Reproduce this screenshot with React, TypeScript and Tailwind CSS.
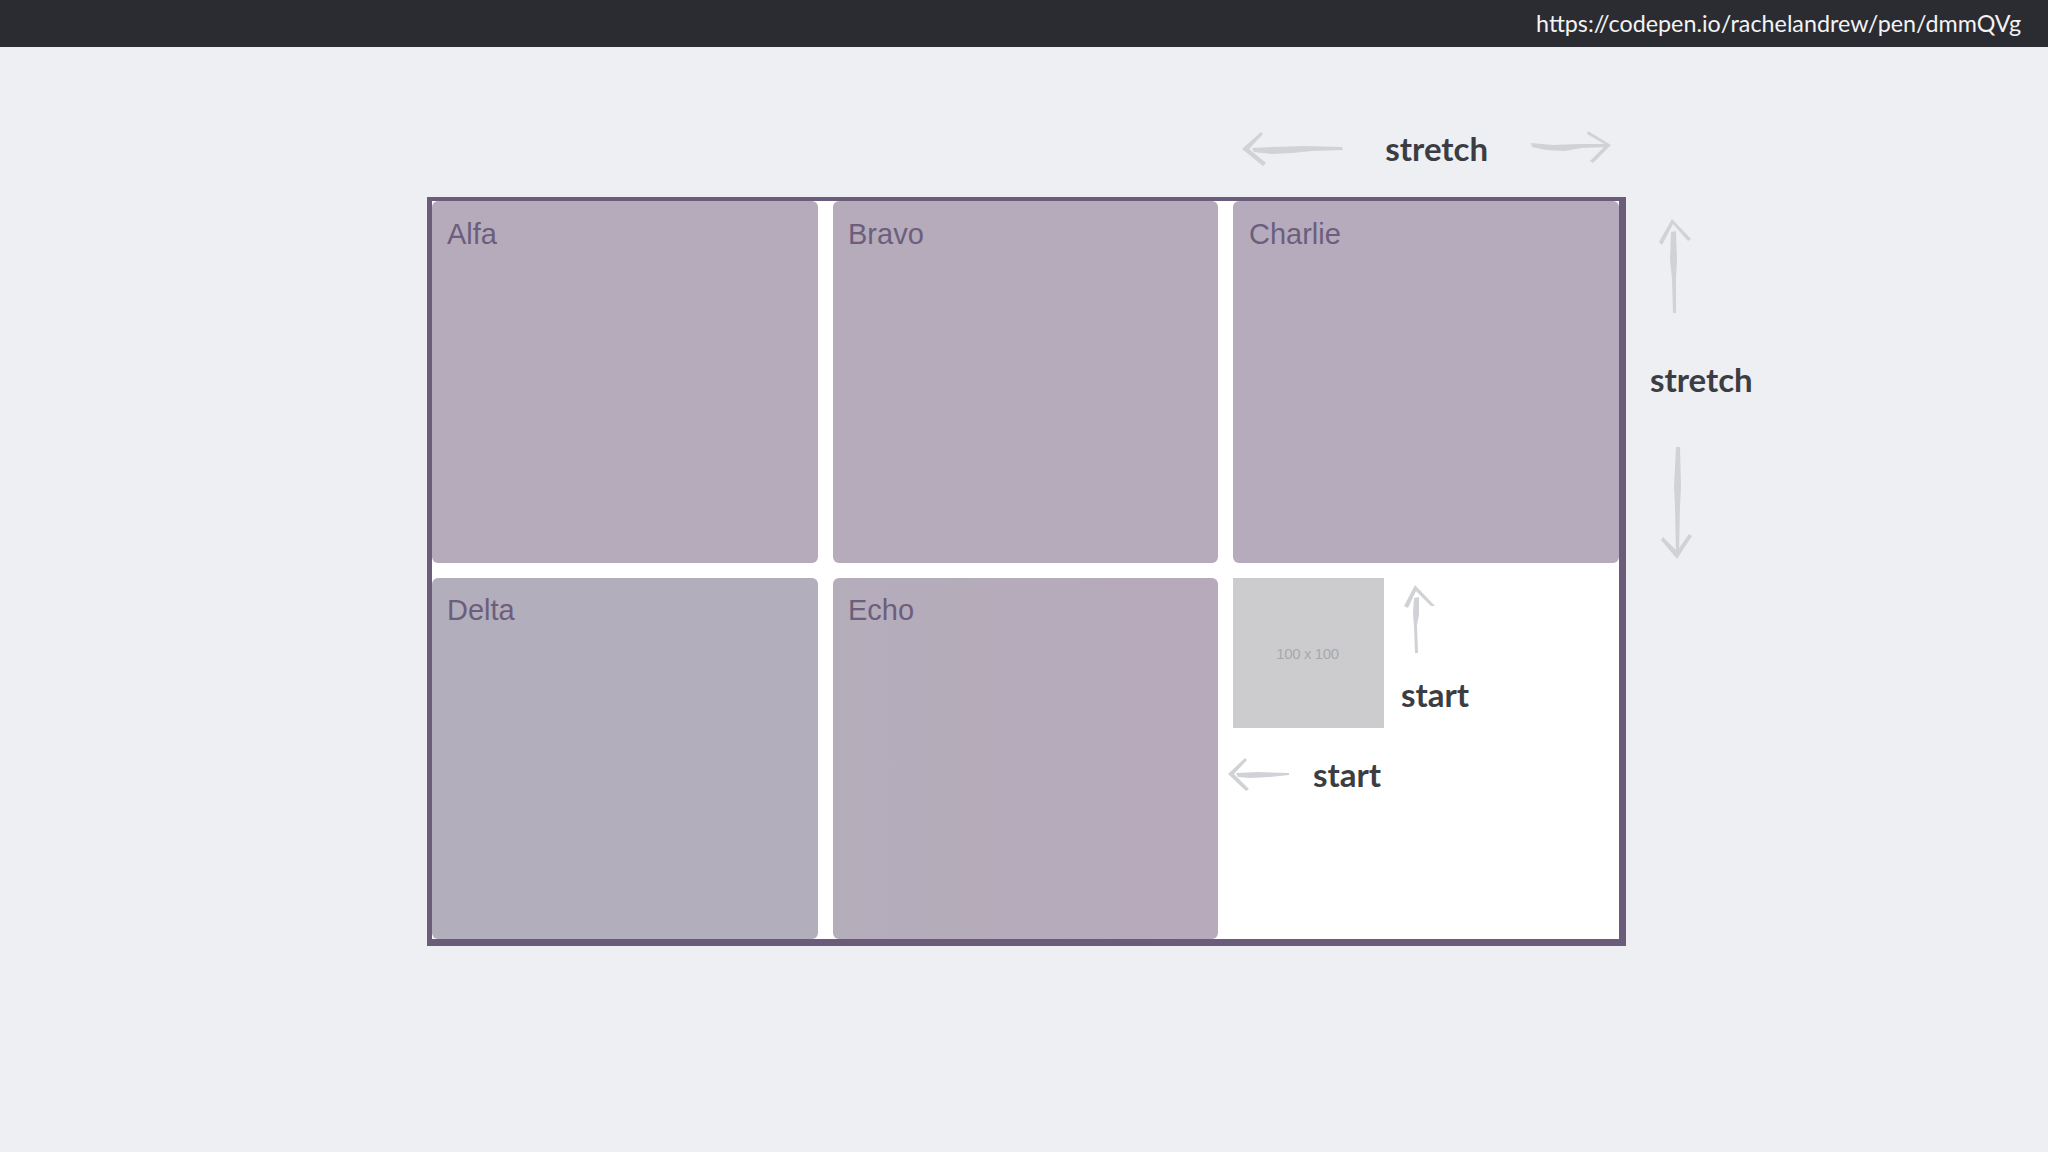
import React from "react";

const arrowColor = "#d0d2d6";

function Arrow({ className = "", w, h, shaft, head }: { className?: string; w: number; h: number; shaft: string; head: string }) {
  return (
    <svg className={`shrink-0 ${className}`} width={w} height={h} viewBox={`0 0 ${w} ${h}`} fill="none">
      <path d={shaft} fill={arrowColor} />
      <path d={head} fill={arrowColor} />
    </svg>
  );
}

function Item({ name, className }: { name: string; className: string }) {
  return (
    <div className={`rounded-[6px] text-[29px] leading-[36px] text-[#6c5e7c] ${className}`}>{name}</div>
  );
}

function Label({ children, className = "" }: { children: React.ReactNode; className?: string }) {
  return <div className={`shrink-0 text-[33px] leading-[40px] font-bold text-[#3c3d43] ${className}`}>{children}</div>;
}

export default function App() {
  return (
    <div className="flex h-[1152px] w-[2048px] flex-col overflow-hidden bg-[#edeff3] font-['Lato','Open_Sans',sans-serif]">
      <header className="flex h-[47px] items-center justify-end bg-[#2b2c31] pr-[27px] text-[23.3px] text-[#f2f3f5]">
        https://codepen.io/rachelandrew/pen/dmmQVg
      </header>
      <main className="flex pl-[427px]">
        <div className="flex w-[1199px] flex-col">
          <div className="mt-[82px] mb-[28px] flex h-[40px] items-center justify-end pr-[15px]">
            <Arrow
              w={102}
              h={34}
              shaft="M10 16 L30 15 L62 14 L100 15 L101 18 L70 19 L50 21 L30 22 L12 20Z"
              head="M0 17 L19 0 L21 2 L7 17 L24 31 L21 34Z"
            />
            <Label className="mb-[2px] ml-[41px]">stretch</Label>
            <Arrow
              className="mb-[4px] ml-[43px]"
              w={80}
              h={32}
              shaft="M0 12 L22 14 L48 13 L78 13 L78 16 L50 17 L34 20 L15 19 L1 16Z"
              head="M57 0 L80 14 L62 32 L59 30 L75 14 L56 3Z"
            />
          </div>
          <div className="grid grid-cols-[386px_385px_386px] grid-rows-[362px_361px] gap-[15px] border-t-[4px] border-r-[7px] border-b-[7px] border-l-[5px] border-[#6b5c7a] bg-white font-['Liberation_Sans',sans-serif]">
            <Item name="Alfa" className="bg-[#b6abbb] px-[15px] pt-[15px]" />
            <Item name="Bravo" className="bg-[#b5abbb] px-[15px] pt-[15px]" />
            <Item name="Charlie" className="bg-[#b6abbc] px-[16px] pt-[15px]" />
            <Item name="Delta" className="bg-[#b3aebb] px-[15px] pt-[14px]" />
            <Item name="Echo" className="bg-linear-to-r from-[#b4adba] to-[#b7aabb] px-[15px] pt-[14px]" />
            <div className="flex flex-col font-['Lato','Open_Sans',sans-serif]">
              <div className="flex">
                <div className="flex h-[150px] w-[151px] items-center justify-center bg-[#cccccf] pt-[2px] pr-[2px] font-['Liberation_Sans',sans-serif] text-[15px] tracking-[-0.4px] text-[#a8a8ab]">
                  100 x 100
                </div>
                <div className="ml-[17px] flex flex-col items-start pt-[7px]">
                  <Arrow
                    className="ml-[2px]"
                    w={32}
                    h={69}
                    shaft="M11 13 L16 12 L16 30 L14 40 L15 68 L12 68 L11 42 L10 28Z"
                    head="M12 0 L32 21 L28 21 L13 6 L5 23 L1 21Z"
                  />
                  <Label className="mt-[20px]">start</Label>
                </div>
              </div>
              <div className="mt-[26px] -ml-[5px] flex items-center">
                <Arrow
                  w={62}
                  h={33}
                  shaft="M8 15 L30 14 L61 15 L61 17 L42 19 L22 20 L10 19Z"
                  head="M0 16 L17 0 L19 2 L6 16 L21 31 L18 33Z"
                />
                <Label className="ml-[23px]">start</Label>
              </div>
            </div>
          </div>
        </div>
        <div className="ml-[24px] flex flex-col items-start pt-[172px]">
          <Arrow
            className="ml-[8px]"
            w={33}
            h={95}
            shaft="M13 13 L18 12 L19 40 L18 60 L18 94 L15 94 L14 60 L12 40Z"
            head="M14 0 L33 20 L30 22 L15 5 L4 26 L1 23Z"
          />
          <Label className="mt-[45px]">stretch</Label>
          <Arrow
            className="mt-[48px] ml-[10px]"
            w={33}
            h={114}
            shaft="M16 0 L20 0 L21 40 L20 60 L19 106 L16 106 L15 60 L14 40Z"
            head="M1 93 L17 112 L32 89 L29 87 L17 104 L3 90Z"
          />
        </div>
      </main>
    </div>
  );
}
